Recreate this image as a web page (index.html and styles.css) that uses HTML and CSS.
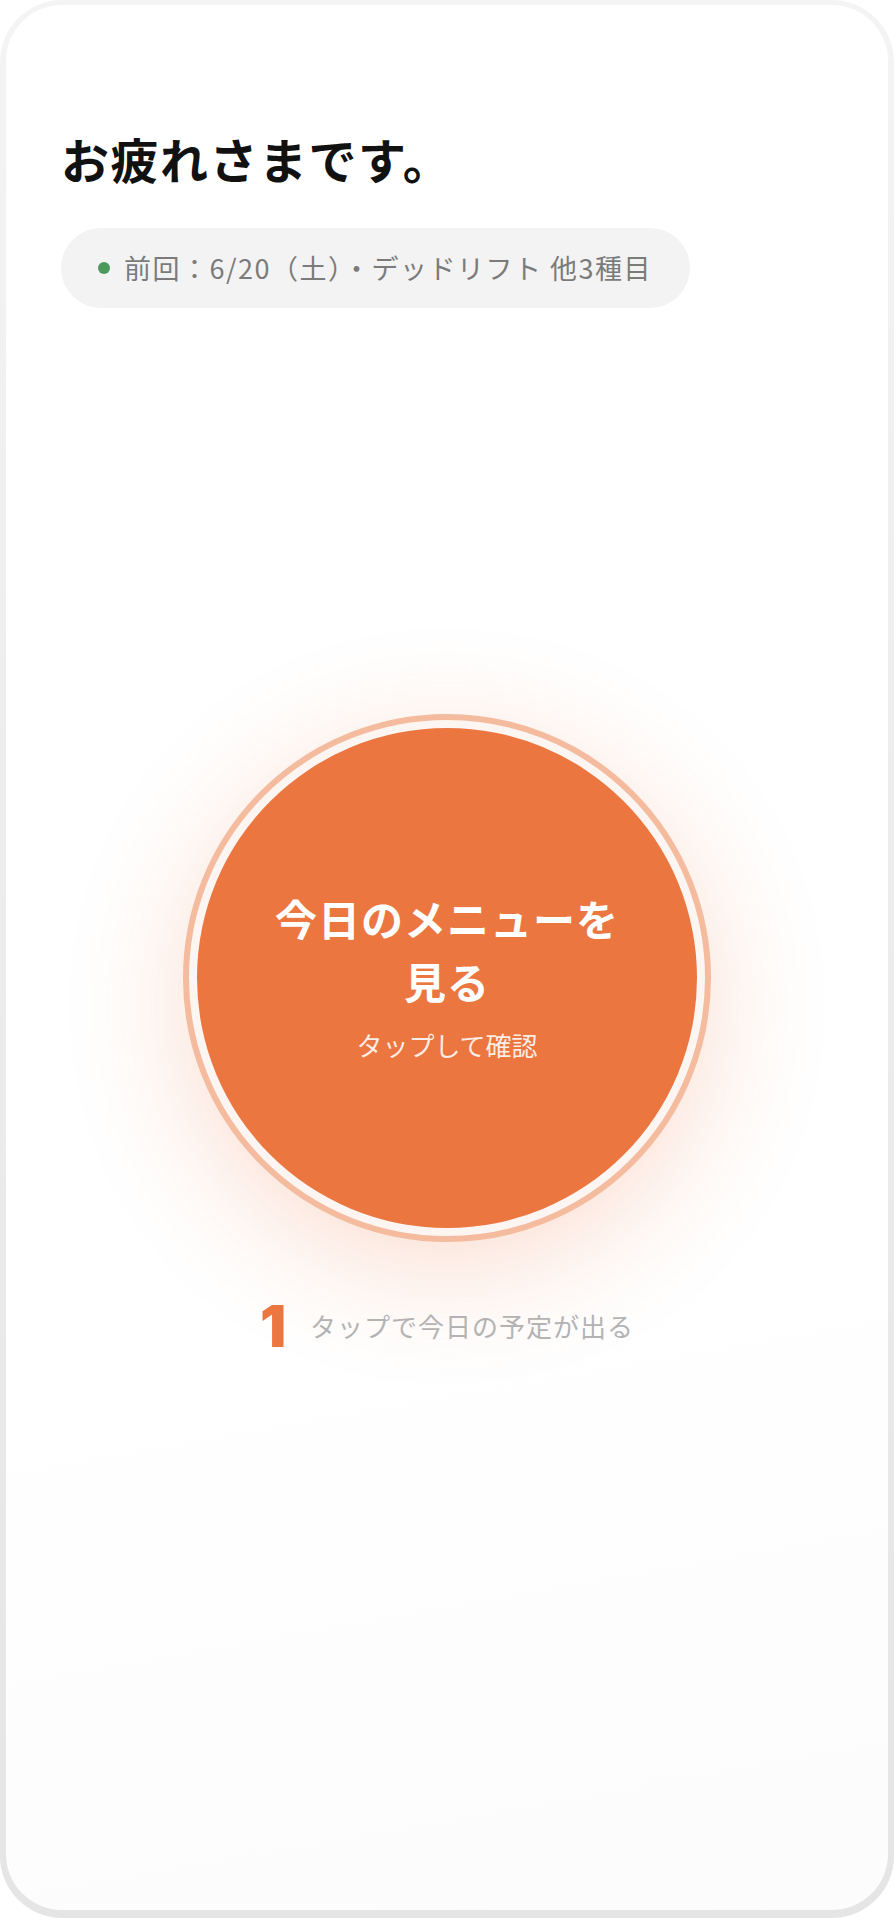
FILE: index.html
```html
<!DOCTYPE html>
<html lang="ja">
<head>
<meta charset="utf-8">
<title>お疲れさまです。</title>
<link rel="stylesheet" href="styles.css">
</head>
<body>
<div class="device">
  <main class="screen">
    <h1 class="greeting">お疲れさまです。</h1>
    <div class="last-session">
      <span class="dot"></span>
      <span class="last-text">前回：6/20（土）・デッドリフト 他3種目</span>
    </div>
    <div class="hero">
      <div class="ring">
        <button class="menu-button" type="button">
          <span class="menu-title">今日のメニューを見る</span>
          <span class="menu-sub">タップして確認</span>
        </button>
      </div>
      <div class="hint">
        <span class="hint-num">1</span>
        <span class="hint-text">タップで今日の予定が出る</span>
      </div>
    </div>
  </main>
</div>
</body>
</html>
```

FILE: styles.css
```css
html, body {
  margin: 0;
  padding: 0;
  background: #ffffff;
}

body {
  font-family: "Noto Sans CJK JP", "Noto Sans", sans-serif;
  width: 894px;
  height: 1918px;
}

.device {
  box-sizing: border-box;
  width: 894px;
  height: 1918px;
  padding: 5px 6px 8px 6px;
  border-radius: 62px;
  background: linear-gradient(180deg, #f4f4f4 0%, #ececec 50%, #e5e5e5 100%);
}

.screen {
  box-sizing: border-box;
  height: 100%;
  border-radius: 56px;
  background: linear-gradient(170deg, #ffffff 0%, #ffffff 65%, #fcfcfc 100%);
  padding: 122px 55px 0 55px;
  display: flex;
  flex-direction: column;
  align-items: flex-start;
}

.greeting {
  margin: 0;
  font-size: 48px;
  line-height: 62px;
  font-weight: 700;
  color: #111111;
  letter-spacing: 1.5px;
}

.last-session {
  margin-top: 39px;
  height: 80px;
  box-sizing: border-box;
  display: inline-flex;
  align-items: center;
  gap: 14px;
  padding: 0 38px 0 37px;
  background: #f3f3f3;
  border-radius: 40px;
}

.dot {
  width: 12px;
  height: 12px;
  border-radius: 50%;
  background: #4c9b5d;
  flex: none;
}

.last-text {
  font-size: 27px;
  line-height: 36px;
  color: #7b7b7b;
  white-space: nowrap;
  letter-spacing: 1.5px;
}

.hero {
  align-self: stretch;
  display: flex;
  flex-direction: column;
  align-items: center;
  margin-top: 406px;
}

.ring {
  box-sizing: border-box;
  width: 528px;
  height: 528px;
  border-radius: 50%;
  border: 6px solid #f4bb9e;
  padding: 8px;
  background: #fdf5f1;
  box-shadow: 0 28px 110px 8px rgba(236, 118, 64, 0.22);
}

.menu-button {
  box-sizing: border-box;
  width: 500px;
  height: 500px;
  border: none;
  border-radius: 50%;
  background: #ec7640;
  color: #ffffff;
  font-family: inherit;
  display: flex;
  flex-direction: column;
  align-items: center;
  justify-content: center;
  padding: 0 0 6px 0;
  cursor: pointer;
}

.menu-title {
  width: 360px;
  font-size: 42px;
  line-height: 63px;
  font-weight: 700;
  text-align: center;
  letter-spacing: 1px;
}

.menu-sub {
  margin-top: 13px;
  font-size: 26px;
  line-height: 39px;
  font-weight: 400;
  color: rgba(255, 255, 255, 0.88);
}

.hint {
  margin-top: 55px;
  display: flex;
  align-items: center;
  gap: 24px;
}

.hint-num {
  font-family: Inter, "Noto Sans", sans-serif;
  font-size: 58px;
  line-height: 1;
  font-weight: 900;
  color: #ec7640;
}

.hint-text {
  font-size: 26px;
  line-height: 36px;
  color: #b3b3b3;
  letter-spacing: 1px;
}
```
